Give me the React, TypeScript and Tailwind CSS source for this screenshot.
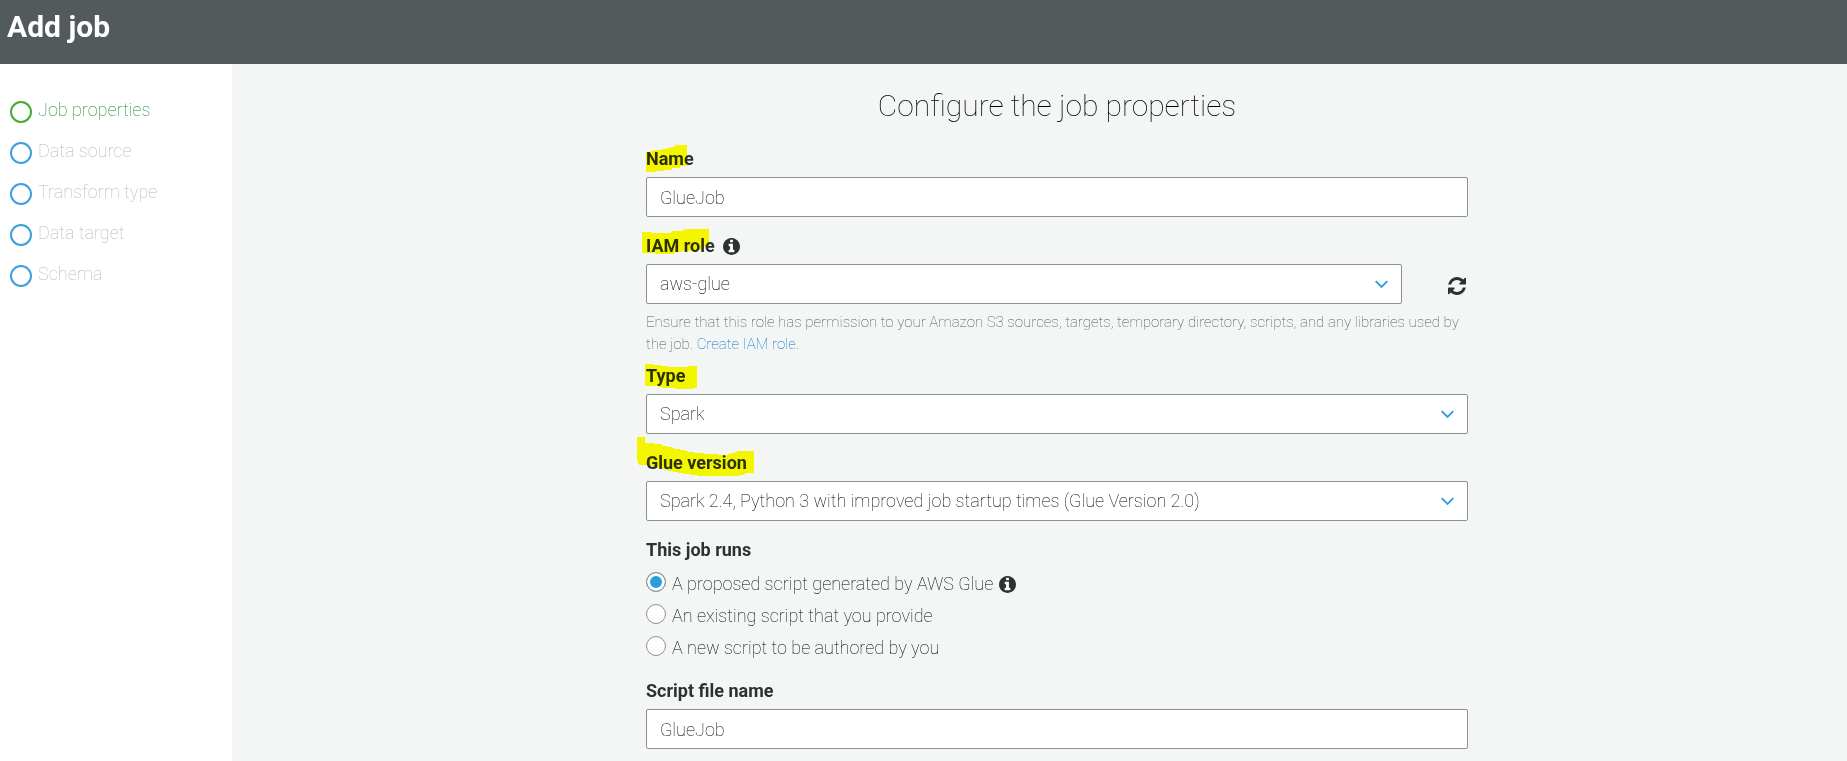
import { useState } from "react";
import type { ReactNode } from "react";
import clsx from "clsx";

const STEPS = ["Job properties", "Data source", "Transform type", "Data target", "Schema"];

const SCRIPT_SOURCES = [
  { id: "proposed", label: "A proposed script generated by AWS Glue", info: true },
  { id: "existing", label: "An existing script that you provide", info: false },
  { id: "new", label: "A new script to be authored by you", info: false },
];

// Marker strokes drawn over the field labels, relative to the label's top left corner
const MARKS = {
  name: "0,5 8,4 8,3 16,3 16,2 25,1 25,0 29,0 29,-2 41,-2 41,19 34,19 34,21 26,21 26,23 10,24 10,25 0,25",
  role: "-4,-2 5,-2 5,-1 25,-1 26,-3 37,-3 38,-5 63,-5 63,12 57,12 57,16 42,17 30,18 27,20 10,20 10,19 -4,19",
  type: "-1,0 7,0 7,1 22,2 22,3 42,3 42,2 51,2 51,24 47,24 47,25 30,25 30,24 16,24 16,23 8,22 -1,22",
  version:
    "-9,-14 -1,-14 -1,-8 16,-7 16,-5 26,-4 26,-3 42,0 42,1 54,2 62,3 82,4 82,3 88,2 92,0 108,0 108,22 100,22 100,23 92,25 56,25 40,23 24,20 14,17 -1,14 -7,14 -9,9",
};

function Mark({ points }: { points: string }) {
  return (
    <svg
      className="absolute top-0 left-0 size-px overflow-visible mix-blend-multiply pointer-events-none"
      shapeRendering="crispEdges"
      aria-hidden="true"
    >
      <polygon points={points} fill="#ffff00" />
    </svg>
  );
}

function InfoButton({ label }: { label: string }) {
  return (
    <button type="button" aria-label={label} className="text-[#2d3131]">
      <svg className="size-[17px]" viewBox="128 128 1536 1536">
        <circle cx="896" cy="896" r="700" fill="white" />
        <path
          fill="currentColor"
          d="M1152 1376v-160q0-14-9-23t-23-9h-96v-512q0-14-9-23t-23-9h-320q-14 0-23 9t-9 23v160q0 14 9 23t23 9h96v320h-96q-14 0-23 9t-9 23v160q0 14 9 23t23 9h448q14 0 23-9t9-23zm-128-896v-160q0-14-9-23t-23-9h-192q-14 0-23 9t-9 23v160q0 14 9 23t23 9h192q14 0 23-9t9-23zm640 416q0 209-103 385.5t-279.5 279.5-385.5 103-385.5-103-279.5-279.5-103-385.5 103-385.5 279.5-279.5 385.5-103 385.5 103 279.5 279.5 103 385.5z"
        />
      </svg>
    </button>
  );
}

function FieldLabel({ htmlFor, mark, children }: { htmlFor: string; mark?: string; children: ReactNode }) {
  return (
    <div className="relative">
      <label htmlFor={htmlFor} className="block font-bold text-[#2d3131]">
        {children}
      </label>
      {mark && <Mark points={mark} />}
    </div>
  );
}

function TextField({ id, defaultValue }: { id: string; defaultValue: string }) {
  return (
    <input
      id={id}
      type="text"
      defaultValue={defaultValue}
      className="block w-full h-10 px-[13px] bg-white border border-[#879196] rounded-xs"
    />
  );
}

function SelectField({ id, value }: { id: string; value: string }) {
  return (
    <div className="relative flex-1">
      <select
        id={id}
        defaultValue={value}
        className="block w-full h-10 pl-[13px] pr-10 bg-white border border-[#879196] rounded-xs appearance-none"
      >
        <option value={value}>{value}</option>
      </select>
      <svg
        className="absolute right-[14px] top-4 w-[13px] h-[9px] pointer-events-none"
        viewBox="0 0 13 9"
        fill="none"
        stroke="#2f9bdb"
        strokeWidth="1.8"
        aria-hidden="true"
      >
        <path d="M0.7 1.2 L6.5 7 L12.3 1.2" />
      </svg>
    </div>
  );
}

export default function App() {
  const [source, setSource] = useState("proposed");

  return (
    <div className="min-h-screen flex flex-col bg-white font-[Roboto,sans-serif] font-thin text-[18px] leading-6 text-black">
      {/* Header */}
      <header className="h-16 px-[7px] pt-2 bg-[#525a5c]">
        <h1 className="text-white text-[30px] leading-[38px] font-bold">Add job</h1>
      </header>

      <div className="flex flex-1">
        {/* Wizard steps */}
        <nav className="w-[232px] shrink-0 pt-[34px] pl-[10px]">
          <ol>
            {STEPS.map((step, i) => (
              <li key={step} className="h-[41px] flex items-start gap-[6px]">
                <span
                  className={clsx(
                    "mt-[3px] size-[22px] rounded-full border-2",
                    i === 0 ? "border-[#3fae2a]" : "border-[#3f9fdc]"
                  )}
                />
                <a href="#" className={i === 0 ? "text-[#1d8a2c]" : "text-[#b4b8ba]"}>
                  {step}
                </a>
              </li>
            ))}
          </ol>
        </nav>

        {/* Form */}
        <main className="flex-1 bg-[#f4f6f6] pl-[35px] pt-[21px] pb-3">
          <form className="w-full max-w-[822px] mx-auto">
            <h2 className="mb-5 text-center text-[30px] leading-[42px]">Configure the job properties</h2>

            <div className="flex flex-col gap-[6px] mb-[17px]">
              <FieldLabel htmlFor="name" mark={MARKS.name}>Name</FieldLabel>
              <TextField id="name" defaultValue="GlueJob" />
            </div>

            <div className="flex flex-col gap-[6px] mb-[9px]">
              <div className="flex items-center gap-2">
                <FieldLabel htmlFor="role" mark={MARKS.role}>IAM role</FieldLabel>
                <InfoButton label="About IAM role" />
              </div>
              <div className="flex items-center">
                <SelectField id="role" value="aws-glue" />
                <div className="w-[66px] flex justify-end pr-[2px] pt-1">
                  <button type="button" aria-label="Refresh roles" className="text-[#2d3131]">
                    <svg className="size-[18px]" viewBox="0 0 1536 1536" fill="currentColor">
                      <path d="M1511 928q0 5-1 7-64 268-268 434.5t-478 166.5q-146 0-282.5-55t-243.5-157l-129 129q-19 19-45 19t-45-19-19-45v-448q0-26 19-45t45-19h448q26 0 45 19t19 45-19 45l-137 137q71 66 161 102t187 36q134 0 250-65t186-179q11-17 53-117 8-23 30-23h192q13 0 22.5 9.5t9.5 22.5zm25-800v448q0 26-19 45t-45 19h-448q-26 0-45-19t-19-45 19-45l138-138q-148-137-349-137-134 0-250 65t-186 179q-11 17-53 117-8 23-30 23h-199q-13 0-22.5-9.5t-9.5-22.5v-7q65-268 270-434.5t480-166.5q146 0 284 55.5t245 156.5l130-129q19-19 45-19t45 19 19 45z" />
                    </svg>
                  </button>
                </div>
              </div>
              <p className="pt-px text-[15px] leading-[22px] text-[#4d5659]">
                Ensure that this role has permission to your Amazon S3 sources, targets, temporary directory, scripts,
                and any libraries used by the job.{" "}
                <a href="#" className="text-[#0073cc]">Create IAM role.</a>
              </p>
            </div>

            <div className="flex flex-col gap-[6px] mb-[17px]">
              <FieldLabel htmlFor="type" mark={MARKS.type}>Type</FieldLabel>
              <SelectField id="type" value="Spark" />
            </div>

            <div className="flex flex-col gap-[6px] mb-[17px]">
              <FieldLabel htmlFor="version" mark={MARKS.version}>Glue version</FieldLabel>
              <SelectField
                id="version"
                value="Spark 2.4, Python 3 with improved job startup times (Glue Version 2.0)"
              />
            </div>

            <fieldset className="mb-[11px]">
              <legend className="mb-[10px] font-bold text-[#2d3131]">This job runs</legend>
              {SCRIPT_SOURCES.map((item) => (
                <div key={item.id} className="h-8 flex items-start gap-[6px]">
                  <input
                    id={item.id}
                    type="radio"
                    name="source"
                    checked={source === item.id}
                    onChange={() => setSource(item.id)}
                    className="size-5 shrink-0 appearance-none rounded-full border border-[#879196] bg-white checked:bg-[#2f9bdb] checked:shadow-[inset_0_0_0_3px_white]"
                  />
                  <div className="flex items-center gap-[6px]">
                    <label htmlFor={item.id}>{item.label}</label>
                    {item.info && <InfoButton label="About proposed scripts" />}
                  </div>
                </div>
              ))}
            </fieldset>

            <div className="flex flex-col gap-[6px]">
              <FieldLabel htmlFor="script">Script file name</FieldLabel>
              <TextField id="script" defaultValue="GlueJob" />
            </div>
          </form>
        </main>
      </div>
    </div>
  );
}
